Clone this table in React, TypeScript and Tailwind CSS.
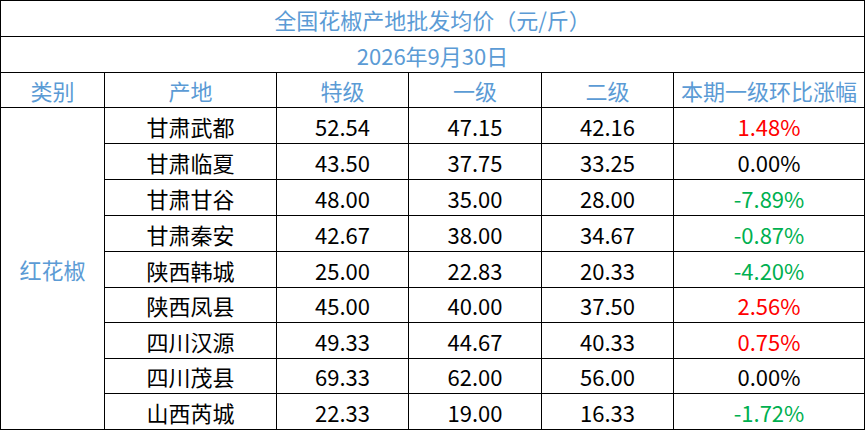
const rows = [
  { place: "甘肃武都", top: "52.54", first: "47.15", second: "42.16", change: "1.48%" },
  { place: "甘肃临夏", top: "43.50", first: "37.75", second: "33.25", change: "0.00%" },
  { place: "甘肃甘谷", top: "48.00", first: "35.00", second: "28.00", change: "-7.89%" },
  { place: "甘肃秦安", top: "42.67", first: "38.00", second: "34.67", change: "-0.87%" },
  { place: "陕西韩城", top: "25.00", first: "22.83", second: "20.33", change: "-4.20%" },
  { place: "陕西凤县", top: "45.00", first: "40.00", second: "37.50", change: "2.56%" },
  { place: "四川汉源", top: "49.33", first: "44.67", second: "40.33", change: "0.75%" },
  { place: "四川茂县", top: "69.33", first: "62.00", second: "56.00", change: "0.00%" },
  { place: "山西芮城", top: "22.33", first: "19.00", second: "16.33", change: "-1.72%" },
];

const changeColor = (v: string) => {
  if (v.startsWith("-")) return "text-[#00b050]";
  if (v === "0.00%") return "text-black";
  return "text-[#ff0000]";
};

const cell = "border border-black text-center p-0";

export default function App() {
  return (
    <div className="w-[865px] h-[431px] bg-white overflow-hidden font-['Microsoft_YaHei','Noto_Sans_CJK_SC',sans-serif] text-[22px] leading-none">
      <table className="border-collapse table-fixed w-[864px]">
        <colgroup>
          <col className="w-[104px]" />
          <col className="w-[172px]" />
          <col className="w-[132px]" />
          <col className="w-[133px]" />
          <col className="w-[132px]" />
          <col className="w-[191px]" />
        </colgroup>
        <tbody>
          <tr className="h-[36px]">
            <td colSpan={6} className={`${cell} text-[#5b9bd5]`}>
              全国花椒产地批发均价（元/斤）
            </td>
          </tr>
          <tr className="h-[36px]">
            <td colSpan={6} className={`${cell} text-[#5b9bd5]`}>
              2026年9月30日
            </td>
          </tr>
          <tr className="h-[35px] text-[#5b9bd5]">
            <td className={cell}>类别</td>
            <td className={cell}>产地</td>
            <td className={cell}>特级</td>
            <td className={cell}>一级</td>
            <td className={cell}>二级</td>
            <td className={cell}>本期一级环比涨幅</td>
          </tr>
          {rows.map((r, i) => (
            <tr key={r.place} className={i === 5 || i === 7 ? "h-[35px]" : "h-[36px]"}>
              {i === 0 && (
                <td rowSpan={9} className={`${cell} text-[#5b9bd5]`}>
                  红花椒
                </td>
              )}
              <td className={cell}>{r.place}</td>
              <td className={cell}>{r.top}</td>
              <td className={cell}>{r.first}</td>
              <td className={cell}>{r.second}</td>
              <td className={`${cell} ${changeColor(r.change)}`}>{r.change}</td>
            </tr>
          ))}
        </tbody>
      </table>
    </div>
  );
}
